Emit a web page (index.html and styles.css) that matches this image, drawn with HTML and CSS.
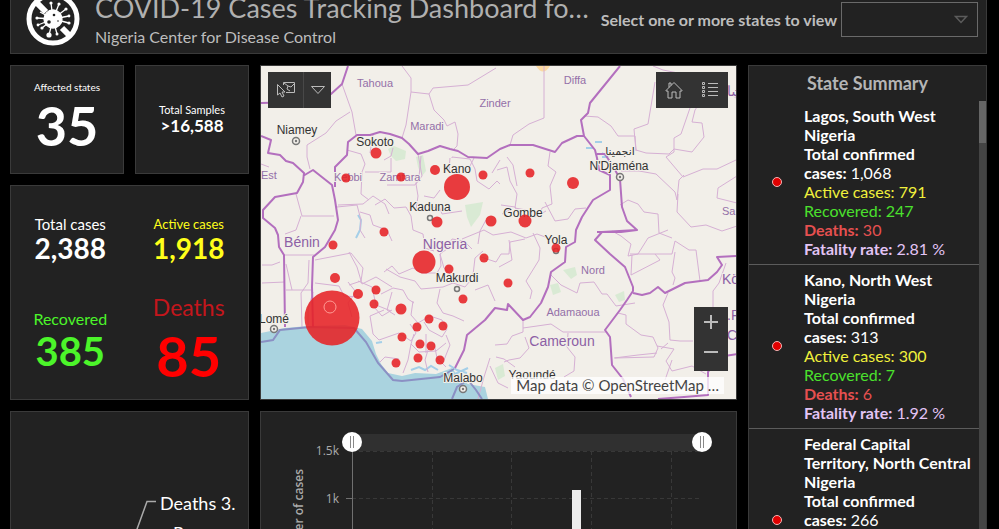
FILE: index.html
```html
<!DOCTYPE html>
<html lang="en">
<head>
<meta charset="utf-8">
<title>COVID-19 Cases Tracking Dashboard</title>
<link rel="stylesheet" href="styles.css">
</head>
<body>
<div class="app">
  <header class="panel header">
    <svg class="logo" viewBox="-27 -27 54 54" aria-hidden="true">
      <g stroke="#fff" stroke-width="1.3" fill="#fff">
        <path d="M0 0L-2 -16M0 0L6 -15M0 0L13 -10M0 0L16 -3M0 0L16 4M0 0L-16 -1M0 0L-15 6M0 0L-11 9M0 0L-4 16M0 0L4 15M0 0L-13 -7"/>
        <circle r="9"/>
        <g stroke="none"><circle cx="-2" cy="-16" r="1.6"/><circle cx="6" cy="-15" r="1.6"/><circle cx="13" cy="-10" r="1.6"/><circle cx="16" cy="-3" r="1.4"/><circle cx="16" cy="4" r="1.6"/><circle cx="-16" cy="-1" r="1.6"/><circle cx="-15" cy="6" r="1.4"/><circle cx="-11" cy="9" r="1.6"/><circle cx="-4" cy="16" r="2.6"/><circle cx="4" cy="15" r="1.5"/></g>
      </g>
      <path d="M-17 -17L-7 -7M9 9L17 17" stroke="#fff" stroke-width="6"/>
      <circle r="24" fill="none" stroke="#fff" stroke-width="5"/>
      <circle cx="-4" cy="3" r="1.8" fill="#222"/><circle cx="1" cy="-4" r="1.3" fill="#222"/><circle cx="5" cy="2" r=".8" fill="#222"/>
    </svg>
    <div class="titles">
      <h1>COVID-19 Cases Tracking Dashboard fo…</h1>
      <p>Nigeria Center for Disease Control</p>
    </div>
    <label class="picker-label" for="states">Select one or more states to view</label>
    <div class="picker">
      <select id="states"><option></option></select>
      <svg viewBox="0 0 14 9" aria-hidden="true"><path d="M1.500 1.500H12.500L7 7.500Z" fill="none" stroke="#5c5c5c" stroke-width="1.500"/></svg>
    </div>
  </header>

  <div class="stats">
    <div class="stats-top">
      <section class="panel kpi affected"><h2>Affected states</h2><p>35</p></section>
      <section class="panel kpi samples"><h2>Total Samples</h2><p>&gt;16,588</p></section>
    </div>
    <section class="panel totals">
      <div class="kpi total"><h2>Total cases</h2><p>2,388</p></div>
      <div class="kpi active"><h2>Active cases</h2><p>1,918</p></div>
      <div class="kpi recovered"><h2>Recovered</h2><p>385</p></div>
      <div class="kpi deaths"><h2>Deaths</h2><p>85</p></div>
    </section>
  </div>

  <section class="panel map">
    <svg viewBox="261 66 475 333" role="img" aria-label="Map of confirmed cases">
      <rect x="261" y="66" width="475" height="333" fill="#f2efe9"/>
      <g fill="#cfe8cb" opacity=".7">
        <path d="M388 149l6 -3 12 5 -1 8 -9 2 -5 -5zM416 157l7 -2 3 16 -4 5 -4 -9zM465 205l18 -3 -3 13 -9 12 -4 -10zM563 270l12 -3 2 8 -6 4zM615 295l9 -4 1 9 -6 2zM550 285l8 -2 3 9 -8 3zM495 368l8 -4 2 12 -7 4z"/>
      </g>
      <path d="M536 66h14q-7 11 -14 0z" fill="#fbd9a2"/>
      <path d="M261 333L285 328 308 326 345 325 362 329 372 341 376 354 381 364 388 373 402 376 415 373 436 374 452 368 459 378 468 384 485 387 488 399H261Z" fill="#aad3df"/>
      <path d="M358 215l3 5 -1 10 -4 8M586 148h8M595 142h7M602 153l6 4M602 157h6M449 365l8 5 10 3M376 343l6 -1 M411 370l8 -3 6 3 6 -4 7 4M455 374l13 -6" stroke="#a4cfe8" stroke-width="2" fill="none"/>
      <g class="minor">
        <path d="M402 66l9 12V92L406 125 402 138M411 92l18 2 4 -6 35 -3 28 -17M429 94l5 16 10 10 3 6 8 -4 3 12 -1 12 -4 4M342 84l10 28 4 23M350 112l-14 9 -10 12 -19 12v12l3 12"/>
        <path d="M347 150l14 4 4 10 -3 8 -1 22 8 6M370 153l3 -18M384 160l7 -4 2 -8M365 172h26v-14M387 185l28 0 4 -8 2 -21M418 154l4 22 -6 8 2 12 -2 14 11 0 12 -4 3 8 20 -3M440 190l-6 8 -10 -2M452 158v-1l18 2 5 10 2 12 12 8 8 -8 3 3M449 170l1 -12"/>
        <path d="M261 164l8 3M296 194l6 22h32M301 216l-5 14 -11 4M338 205l25 -1 10 -8 12 8 4 10M360 212l10 3 3 10 14 5 5 11M375 205l10 -6 9 9 12 -1 5 9 2 14 10 4 2 14 9 3"/>
        <path d="M337 207l20 -2 4 15 -1 10 5 8M315 260l36 -7 12 15 -2 13 -12 4M315 283l24 3 5 10 16 1M349 252l8 15 5 17 14 -7 16 10M280 262l-8 3 -10 0M284 255h30M286 290l25 0M292 290l-6 -26M309 260l-1 23 -7 10 1 34M313 292l-5 18v15M262 283l23 -1"/>
        <path d="M348 282l8 10 -8 11 4 14M358 281l14 6 4 18 15 6M381 294l12 -6 10 2 5 9 6 4M374 307l8 9 10 -6M392 292l-5 18 8 5M384 310l-14 6 3 18 6 6M379 340l20 -7 12 8 5 -8 -6 -9M413 301l-2 14 7 8 12 -7 12 4 5 9 -5 8 -13 -7 -5 -8M414 334l-3 10 8 8 17 -1 10 -8M434 343l3 15 9 9M411 344l-3 16 -5 13M428 350l-3 10 3 12M426 334v19M399 359l-14 -2 -5 5M446 335l4 10 -6 15"/>
        <path d="M384 272l8 -6 7 8 14 -6 9 5 15 0 4 -7 -1 -12 7 -5 5 -10 12 2 8 8M386 269l14 8 15 4 6 8 22 -2 10 -4 12 4 5 -6M462 239l22 -9 9 5 18 -3 15 6 11 -4 11 4M440 254l4 14 9 9 20 -2 2 -17 8 -7M440 289l-3 14 6 10 10 3 11 5M475 290l13 -5 7 16M481 257l15 5 5 -8 8 0 1 -12 15 -3M501 205l14 2 5 8 15 2 11 -6M497 170l10 -3 3 14 7 13 -2 14 11 2M500 160l-8 13M550 152l-2 14 8 6 -6 14 2 18 -10 4 -2 7M502 214l9 -5 4 6M545 202l10 19 13 -2 7 -10 11 -1M507 157l6 8 4 21M533 233l7 15 -1 12 -13 21 6 10 -2 8M509 240l3 20 -13 7M474 158l-6 12M486 220l-6 11 -2 13"/>
        <path d="M544 66v52l-15 6 -16 11 -3 10M584 116l14 1 13 9 7 10 17 0 1 14 10 3 23 1 5 -5 18 3 12 -15 -2 -14 -10 -1 3 -12 9 -13M655 82l-7 42 -14 5 2 22M690 108l-9 26 -7 4 0 14 -8 5 17 20 20 -8 14 0 19 -9M621 171l18 0 17 3 19 18 2 8 2 -20 5 -5M678 194l-1 18 14 15 15 -2 16 6 15 -5M620 205l8 -5 10 4 6 8 14 2 1 19 13 5M737 176l-19 12 -1 10 20 5M653 66l10 4 20 4 25 4 28 20"/>
        <path d="M612 231l9 5 10 8 -3 12 10 -2 10 -16 20 -8M630 254h25l5 6 -29 15 1 -20M655 254l17 0 3 -13 14 9 7 0 4 31M675 252l-3 20 3 6 -2 7M551 275l10 10 16 8 3 -10 14 -1 8 12 5 0 9 12 19 -3M523 328l28 -4 12 8 43 0M523 320l0 12 -11 4 -5 8 -12 1M504 362l5 -2 11 -2 9 -10 -4 -11M496 357l8 2 11 8M568 333l-1 14 8 10 -1 14 -10 6M618 313l8 2 0 9 15 11 12 2 5 11 -4 9 -39 1M668 293l-5 12 6 17 1 18 10 1 13 0M657 346l17 3 -8 12 6 10 20 -5 14 8M668 343l-7 6M726 263l-7 20 -6 8 0 16M614 358l24 -3 19 -2M665 380l7 -20M490 366l8 17 10 5M478 399l6 -22 6 -19"/>
      </g>
      <g class="major">
        <path d="M348 66L342 84 331 94 300 102 261 103M335 187V167L347 155 348 142 357 135 370 135 380 132 390 134 402 138 409 144 418 154 428 151 440 146 450 149 458 151 468 157 487 158 500 149 510 145 533 145 555 152 562 143 577 136 584 136 595 150 597 158 599 170 610 175V190L593 200 582 217 576 230 575 242 566 247 565 262 551 272 548 287 541 303 530 317 523 320 508 304 507 310 495 308 485 320 467 335 464 350 455 368"/>
        <path d="M620 66L590 103 588 113 581 120 584 136M597 154h8l9 14 6 11 2 28 5 14 10 9 -16 2 -24 0M637 230l-35 2 -7 8 15 14 15 13 8 20 0 4 -6 9 -7 10 -9 12 -6 8 5 7 2 28 11 14 8 18M633 293l9 2 8 -2 8 -6 7 6 20 -10 23 -3 9 -8 5 -7 -5 -8 20 -1M737 354l-19 3 -10 15v23l-24 2 -26 2"/>
        <path d="M261 136l10 4 -3 13 12 2 6 6 7 2 11 10 -1 9 -6 11 -22 4 -12 13 0 8 12 10 3 7 1 12 5 8 1 72M303 176l10 -6 19 15 3 15 3 20 -3 10 -10 17 -12 10 -1 30 1 40"/>
      </g>
      <path d="M261 342l12 -2 7 -10 30 -3 44 1 12 14 12 21 15 17 9 1 38 -4 14 -8M452 399l5 -12 11 -7 8 10 6 9" fill="none" stroke="#837fbd" stroke-width="2" opacity=".8"/>
      <g class="towns"><circle cx="296" cy="141" r="3.500"/><circle cx="620" cy="177" r="3.500"/><circle cx="274" cy="329" r="3.500"/><circle cx="463" cy="389" r="3.500"/><circle cx="430" cy="218" r="2.500"/><circle cx="457" cy="289" r="2.500"/><circle cx="556" cy="251" r="2.500"/></g>
      <g fill="#777"><circle cx="296" cy="141" r="1.200"/><circle cx="620" cy="177" r="1.200"/><circle cx="274" cy="329" r="1.200"/><circle cx="463" cy="389" r="1.200"/></g>
      <g class="region">
        <text x="375" y="87">Tahoua</text><text x="495" y="107">Zinder</text><text x="575" y="84">Diffa</text><text x="427" y="130">Maradi</text><text x="261" y="179" class="from">Est</text><text x="348" y="181">Kebbi</text><text x="400" y="181">Zamfara</text><text x="593" y="274">Nord</text><text x="573" y="316">Adamaoua</text><text x="722" y="215" class="from">Sa</text>
      </g>
      <g class="country"><text x="302" y="247">Bénin</text><text x="445" y="249">Nigeria</text><text x="562" y="346">Cameroun</text><text x="722" y="284" class="from">Kö</text><text x="727" y="320" class="from">.R</text><text x="727" y="340" class="from">Co</text><text x="727" y="96" class="from">شا</text></g>
      <g class="city"><text x="297" y="134">Niamey</text><text x="375" y="146">Sokoto</text><text x="457" y="173">Kano</text><text x="430" y="211">Kaduna</text><text x="523" y="217">Gombe</text><text x="556" y="244">Yola</text><text x="457" y="282">Makurdi</text><text x="619" y="170">N'Djaména</text><text x="620" y="155" class="arabic">انجمينا</text><text x="274" y="323">Lomé</text><text x="463" y="382">Malabo</text><text x="532" y="379">Yaoundé</text></g>
      <g class="cases">
        <circle cx="376" cy="153" r="5.500"/><circle cx="346" cy="178" r="4.500"/><circle cx="401" cy="177" r="4.500"/><circle cx="435" cy="170" r="5"/><circle cx="457" cy="187" r="13"/><circle cx="483" cy="175" r="4.500"/><circle cx="530" cy="173" r="4.500"/><circle cx="573" cy="183" r="6"/><circle cx="525" cy="221" r="6.500"/><circle cx="491" cy="221" r="5.500"/><circle cx="437" cy="222" r="5.500"/><circle cx="384" cy="232" r="4.500"/><circle cx="333" cy="245" r="4.500"/><circle cx="335" cy="278" r="5"/><circle cx="424" cy="262" r="11.500"/><circle cx="449" cy="269" r="4.500"/><circle cx="484" cy="258" r="4.500"/><circle cx="556" cy="248" r="4.500"/><circle cx="508" cy="283" r="4.500"/><circle cx="463" cy="299" r="4.500"/><circle cx="332" cy="318" r="27.500"/><circle cx="330" cy="307" r="6" class="ring"/><circle cx="358" cy="294" r="5"/><circle cx="376" cy="290" r="4.500"/><circle cx="374" cy="304" r="4.500"/><circle cx="401" cy="309" r="5.500"/><circle cx="402" cy="337" r="4.500"/><circle cx="417" cy="327" r="4.500"/><circle cx="429" cy="319" r="4.500"/><circle cx="443" cy="326" r="4.500"/><circle cx="420" cy="344" r="4.500"/><circle cx="431" cy="346" r="4.500"/><circle cx="396" cy="363" r="4.500"/><circle cx="418" cy="358" r="4.500"/><circle cx="440" cy="360" r="4.500"/>
      </g>
    </svg>
    <div class="tools tools-select">
      <button aria-label="Select"><svg width="20" height="18" viewBox="0 0 20 18"><path d="M7.500 4V1.500H18.500V11.500H10M8 2l4 3 -1 3 3 2M18 3l-3 3 -3 -1M1.500 3.500V14l2.500 -2 2 4 2 -1 -2 -4H9Z"/></svg></button>
      <button class="narrow" aria-label="More selection tools"><svg width="16" height="10" viewBox="0 0 16 10"><path d="M1.500 1.500H14.500L8 8.500Z"/></svg></button>
    </div>
    <div class="tools tools-view">
      <button aria-label="Home"><svg width="18" height="18" viewBox="0 0 18 18"><path d="M1 9.500L9 1.500 17 9.500V10H15V17H11V11H7V17H3V10H1ZM4 6.500V2H6V4.500"/></svg></button>
      <button aria-label="Legend"><svg width="18" height="18" viewBox="0 0 18 18"><path d="M7 2.500H17M7 6.500H17M7 10.500H17M7 14.500H17M1.500 1.500h2v2h-2zM1.500 5.500h2v2h-2zM1.500 9.500h2v2h-2zM1.500 13.500h2v2h-2z"/></svg></button>
    </div>
    <div class="tools tools-zoom">
      <button aria-label="Zoom in"><svg width="16" height="16" viewBox="0 0 16 16"><path d="M8 1V15M1 8H15" stroke-width="2"/></svg></button>
      <button aria-label="Zoom out"><svg width="16" height="16" viewBox="0 0 16 16"><path d="M1 8H15" stroke-width="2"/></svg></button>
    </div>
    <p class="attribution">Map data © OpenStreetMap …</p>
  </section>

  <section class="panel summary">
    <h2>State Summary</h2>
    <div class="scroller">
      <ul>
        <li><i class="dot"></i><div><b>Lagos, South West<br>Nigeria<br>Total confirmed<br>cases:</b> 1,068<br><span class="yellow">Active cases: 791</span><br><span class="green">Recovered: 247</span><br><span class="red"><b>Deaths:</b> 30</span><br><span class="violet"><b>Fatality rate:</b> 2.81 %</span></div></li>
        <li><i class="dot"></i><div><b>Kano, North West<br>Nigeria<br>Total confirmed<br>cases:</b> 313<br><span class="yellow">Active cases: 300</span><br><span class="green">Recovered: 7</span><br><span class="red"><b>Deaths:</b> 6</span><br><span class="violet"><b>Fatality rate:</b> 1.92 %</span></div></li>
        <li><i class="dot"></i><div><b>Federal Capital<br>Territory, North Central<br>Nigeria<br>Total confirmed<br>cases:</b> 266<br><br><br><br><br></div></li>
      </ul>
      <div class="track"><div class="thumb"></div></div>
    </div>
  </section>

  <section class="panel pie">
    <svg viewBox="11 412 237 140"><path d="M156 501.500H147L132 543" fill="none" stroke="#aaa" stroke-width="1.500"/><text x="160" y="510">Deaths 3.</text><text x="173" y="540">Recov</text></svg>
  </section>

  <section class="panel chart">
    <svg viewBox="261 412 475 140">
      <rect x="352" y="434" width="349" height="17" fill="#303030"/>
      <path d="M352 451.500H701M352 498.500H701M432.500 451V552M511.500 451V552M591.500 451V552M671.500 451V552" stroke="#383838" stroke-dasharray="4 3"/>
      <path d="M352.500 451V552M346 498.500H353" stroke="#707070"/>
      <rect x="572" y="490" width="9" height="62" fill="#ececec"/>
      <text x="339" y="455" text-anchor="end">1.5k</text><text x="339" y="503" text-anchor="end">1k</text>
      <text class="axis-title" transform="translate(303 469) rotate(-90)" text-anchor="end">Number of cases</text>
    </svg>
    <div class="range">
      <input type="range" min="0" max="100" value="0" aria-label="Range start">
      <input type="range" min="0" max="100" value="100" aria-label="Range end">
    </div>
  </section>
</div>
</body>
</html>
```
FILE: styles.css
```css
* { box-sizing: border-box; }
html { background: #000; }
body {
  margin: 0;
  height: 100vh;
  overflow: hidden;
  background: #000;
  color: #fff;
  font: 16px/19px Lato, "Open Sans", sans-serif;
}
h1, h2, p, ul { margin: 0; padding: 0; }

.app {
  display: grid;
  grid-template-columns: minmax(0, 239fr) minmax(0, 477fr) minmax(0, 239fr);
  gap: 11px;
  margin-top: -16px;
  padding: 0 12px 0 10px;
}
.panel { background: #222; border: 1px solid #3a3a3a; }

.header {
  grid-column: 1 / -1;
  display: flex;
  align-items: center;
  min-height: 70px;
  padding: 0 8px 0 15px;
  color: #bdbdbd;
}
.logo { flex: none; width: 54px; height: 54px; }
.titles { flex: 1; min-width: 0; padding: 0 0 0 15px; }
h1 {
  font-size: 27px;
  line-height: 36px;
  font-weight: 400;
  white-space: nowrap;
  color: #b0b0b0;
}
.titles p { line-height: 22px; }
.picker-label { font-weight: 700; margin-right: 4px; white-space: nowrap; }
.picker { position: relative; width: 137px; height: 35px; }
.picker select {
  width: 100%;
  height: 100%;
  appearance: none;
  background: #222;
  border: 1px solid #6a6a6a;
  border-radius: 0;
}
.picker svg { position: absolute; right: 10px; top: 13px; width: 14px; }

.stats { display: flex; flex-direction: column; gap: 11px; }
.stats-top {
  display: grid;
  grid-template-columns: minmax(0, 1fr) minmax(0, 1fr);
  gap: 11px;
  min-height: 109px;
}
.kpi {
  display: flex;
  flex-direction: column;
  align-items: center;
  justify-content: center;
  text-align: center;
}
.kpi h2 { font-weight: 400; white-space: nowrap; }
.kpi p { font-weight: 700; }
.affected h2 { font-size: 10px; line-height: 12px; }
.affected p { font-size: 54px; line-height: 66px; }
.samples h2 { font-size: 11px; line-height: 14px; }
.samples p { font-size: 17px; line-height: 18px; }
.samples { padding-bottom: 2px; }
.totals {
  flex: 1;
  display: grid;
  grid-template-columns: 1fr 1fr;
  grid-template-rows: 1fr 1fr;
  padding-bottom: 6px;
}
.total h2 { font-size: 15px; line-height: 20px; }
.active h2 { font-size: 13px; line-height: 20px; }
.total p, .active p { font-size: 28px; line-height: 28px; }
.active { color: #ffff1a; }
.recovered { color: #4cf52a; }
.recovered h2 { font-size: 16px; line-height: 20px; }
.recovered p { font-size: 40px; line-height: 44px; }
.deaths h2 { font-size: 23px; line-height: 30px; color: #c4161c; }
.deaths p { font-size: 56px; line-height: 68px; color: #f00; }

.map { position: relative; font-family: "Liberation Sans", Arial, sans-serif; }
.map > svg, .pie svg, .chart svg { display: block; width: 100%; }
.map text { text-anchor: middle; paint-order: stroke; stroke: #f2efe9; stroke-width: 2px; }
.minor { fill: none; stroke: #d6b0d4; stroke-width: 1; }
.major { fill: none; stroke: #b36fbe; stroke-width: 2; stroke-linejoin: round; }
.towns { fill: #f2efe9; stroke: #777; stroke-width: 1.5; }
.region { font-size: 11px; fill: #9470a8; }
.country { font-size: 14px; fill: #8d5fa5; }
.city { font-size: 12px; fill: #333; }
.map .from { text-anchor: start; }
.map .arabic { font-family: "DejaVu Sans", sans-serif; font-size: 11px; }
.cases { fill: #e62226; fill-opacity: .88; }
.cases .ring { fill: none; stroke: #ff9b94; }
.tools { position: absolute; display: flex; background: #333; }
.tools button {
  display: flex;
  align-items: center;
  justify-content: center;
  width: 35px;
  height: 36px;
  padding: 0;
  background: none;
  border: 0;
}
.tools svg { fill: none; stroke: #bbb; }
.tools-select { left: 7px; top: 6px; }
.tools .narrow { width: 28px; border-left: 1px solid #484848; }
.tools-view { right: 8px; top: 6px; }
.tools-view button { width: 36px; }
.tools-zoom { right: 8px; bottom: 28px; flex-direction: column; padding-bottom: 4px; }
.tools-zoom button { width: 34px; height: 30px; }
.attribution {
  position: absolute;
  right: 12px;
  bottom: 5px;
  padding: 0 5px;
  background: rgba(255, 255, 255, .75);
  color: #444;
  font: 15px/17px Lato, sans-serif;
}

.summary {
  grid-row: 2 / 4;
  grid-column: 3;
  contain: size;
}
.summary h2 {
  padding: 8px 0;
  text-align: center;
  font-size: 18px;
  line-height: 19px;
  color: #b5b5b5;
}
.scroller { display: flex; }
.scroller ul { flex: 1; list-style: none; }
.scroller li {
  display: grid;
  grid-template-columns: 55px 1fr;
  align-items: center;
  padding: 5px 0 6px;
  border-bottom: 1px solid #5c5c5c;
  white-space: nowrap;
}
.dot {
  justify-self: center;
  width: 10px;
  height: 10px;
  border: 1px solid #f3b5b5;
  border-radius: 50%;
  background: #e00000;
}
.track { width: 7px; background: #444; }
.thumb { height: 42px; background: #666; }
.yellow { color: #f0f03c; }
.green { color: #4be12d; }
.red { color: #e65050; }
.violet { color: #e3c4f5; }

.pie text { font-size: 18px; fill: #fff; }
.chart { position: relative; }
.chart text { font: 12px "Open Sans", sans-serif; fill: #aaa; }
.chart .axis-title { font-weight: 600; }
.range { position: absolute; left: 17%; right: 5%; top: 20px; height: 20px; }
.range input {
  position: absolute;
  inset: 0;
  width: 100%;
  height: 20px;
  margin: 0;
  appearance: none;
  background: none;
  pointer-events: none;
}
.range input::-webkit-slider-thumb {
  appearance: none;
  width: 20px;
  height: 20px;
  border-radius: 50%;
  pointer-events: auto;
  background: linear-gradient(90deg, #fff 8px, #888 8px 9px, #fff 9px 11px, #888 11px 12px, #fff 12px) center / 20px 12px no-repeat, #fff;
}
```
